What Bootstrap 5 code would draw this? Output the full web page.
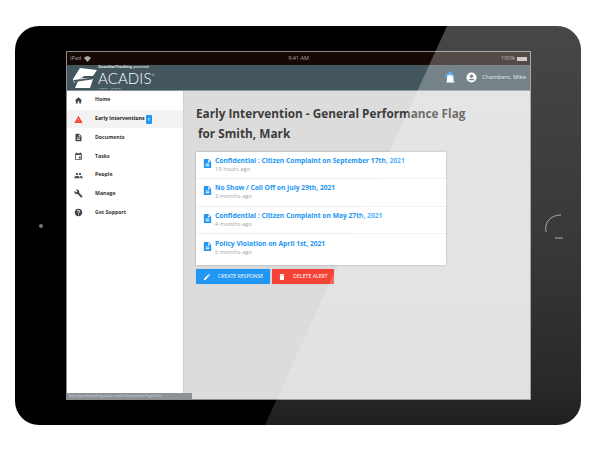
<!DOCTYPE html>
<html lang="en"><head><meta charset="utf-8"><title>Acadis</title>
<link rel="stylesheet" href="https://cdn.jsdelivr.net/npm/bootstrap@5.3.0/dist/css/bootstrap.min.css">
<style>
html,body{height:100%;background:#fff}
body{padding:26px 19px 25px 15px;font-family:"Open Sans","Liberation Sans",sans-serif;overflow:hidden}
.tablet{width:566px;height:399px;background:#000;border-radius:24px;position:relative;overflow:hidden}
.bezel-l{width:51px}.bezel-r{width:50px}
.cam{width:4px;height:4px;border-radius:50%;background:#777}
.homebtn{width:26px;height:28px;fill:none;stroke:#b5b5b5;stroke-width:.8}
.screen{width:465px;height:349px;margin:25px 0;border:1px solid #8d8a88;background:#dcdcdc;position:relative;overflow:hidden}
.statusbar{height:13px;background:#150805;color:#a8a8a8;font-size:5.5px;padding:0 3px}
.statusbar>span{width:60px}
.wifi{width:7px;height:6px;fill:#a8a8a8;margin-left:3px}
.batt{display:inline-block;width:10px;height:4px;background:#bbb;margin-left:2px;vertical-align:-.5px}
.appbar{height:26px;background:#44565e;color:#dfe5e7;border-bottom:1px solid #8a979c}
.logo-mark{width:26px;height:22px;margin-left:5px}
.logo-text{height:26px;margin-top:-2px}
.logo-small{font-family:"Liberation Sans",sans-serif;font-size:4px;line-height:5px;font-weight:700;color:#e9eeee;white-space:nowrap}
.logo-big{font-family:Lato,sans-serif;font-size:15px;line-height:18px;font-weight:300;color:#fff;letter-spacing:.1px}
.logo-big sup{font-size:4px;top:-7px}
.logo-tiny{font-family:"Liberation Sans",sans-serif;font-size:2.5px;line-height:3px;color:#c8d0d3}
.usr{font-size:5.8px;gap:0}
.ic-bell{width:12px;height:13px;margin-right:10px}
.ic-acct{width:11px;height:11px;margin-right:5px}
.side{width:117px;background:#fff;border-right:1px solid #cfcfcf;flex:none}
.side-item{height:18.7px;padding-left:7px;color:#333;font-size:5.2px;font-weight:700;white-space:nowrap}
.side-item svg{width:9px;height:9px;margin-right:12px;fill:#454545;flex:none}
.side-item.on{background:#f3f3f3;color:#222}
.side-item.on svg{fill:#f44336}
.pill{width:6px;height:9px;background:#2196f3;border-radius:1px;margin-left:1px;color:#fff;font-size:4px;line-height:9px;text-align:center}
.main{padding:12px 12px 0 12px}
.pagehead{font-size:11.8px;line-height:20px;font-weight:700;color:#3c3c3c;margin:0 0 9px;white-space:nowrap}
.pagehead span{display:block;padding-left:2px}
.flags{width:250px;height:113px;border-radius:0;border:0;box-shadow:0 0 2px rgba(0,0,0,.3);background:#fff}
.flags .list-group-item{height:27.4px;border:0;border-bottom:1px solid #eee;padding:4px 6px;background:transparent}
.flags .list-group-item:last-child{border-bottom:0;padding-top:5px}
.flags svg{width:11px;height:13px;fill:#2196f3;margin:1px 2px 0 0;flex:none}
.flag-t{font-size:6.7px;line-height:9px;font-weight:700;color:#2196f3;white-space:nowrap}
.flag-s{font-size:5.8px;line-height:8px;color:#a5a5a5;white-space:nowrap}
.acts{gap:2px;margin-top:4px}
.acts .btn{height:15px;font-size:5.2px;line-height:15px;padding:0;border:0;border-radius:1px;color:#fff;display:flex;align-items:center;justify-content:center;gap:7px;box-shadow:0 0 1px rgba(0,0,0,.3)}
.acts svg{width:8px;height:8px;fill:#fff}
.b-new{width:74px;background:#2196f3}.b-del{width:62px;background:#f44336}
.urlbar{position:absolute;left:0;bottom:0;width:125px;height:6px;background:#8f9294;color:#c8d7e4;font-size:3px;line-height:6px;padding-left:2px;white-space:nowrap;overflow:hidden}
.glare{position:absolute;inset:0;pointer-events:none;clip-path:polygon(432px 0,100% 0,100% 100%,250px 100%);background:linear-gradient(to bottom,rgba(255,255,255,.28),rgba(255,255,255,.22) 55%,rgba(255,255,255,.16) 90%,rgba(255,255,255,.12))}
</style></head>
<body>
<svg width="0" height="0" class="position-absolute"><defs>
<symbol id="i-home" viewBox="0 0 24 24"><path d="M10 20v-6h4v6h5v-8h3L12 3 2 12h3v8z"/></symbol>
<symbol id="i-warn" viewBox="0 0 24 24"><path d="M1 21h22L12 2 1 21zm12-3h-2v-2h2v2zm0-4h-2v-4h2v4z"/></symbol>
<symbol id="i-doc" viewBox="0 0 24 24"><path d="M14 2H6c-1.1 0-2 .9-2 2v16c0 1.1.9 2 2 2h12c1.1 0 2-.9 2-2V8l-6-6zm2 16H8v-2h8v2zm0-4H8v-2h8v2zm-3-5V3.5L18.5 9H13z"/></symbol>
<symbol id="i-cal" viewBox="0 0 24 24"><path d="M19 3h-1V1h-2v2H8V1H6v2H5c-1.1 0-2 .9-2 2v14c0 1.1.9 2 2 2h14c1.1 0 2-.9 2-2V5c0-1.1-.9-2-2-2zm0 16H5V8h14v11zM13 12h5v5h-5z"/></symbol>
<symbol id="i-ppl" viewBox="0 0 24 24"><path d="M16 11c1.66 0 3-1.34 3-3s-1.34-3-3-3-3 1.34-3 3 1.34 3 3 3zm-8 0c1.66 0 3-1.34 3-3S9.66 5 8 5 5 6.34 5 8s1.34 3 3 3zm0 2c-2.33 0-7 1.17-7 3.5V19h14v-2.5C15 14.17 10.33 13 8 13zm8 0c-.29 0-.62.02-.97.05 1.16.84 1.97 1.97 1.97 3.45V19h6v-2.5c0-2.33-4.67-3.5-7-3.5z"/></symbol>
<symbol id="i-wr" viewBox="0 0 24 24"><path d="M22.7 19l-9.1-9.1c.9-2.3.4-5-1.5-6.9-2-2-5-2.4-7.4-1.3L9 6 6 9 1.6 4.7C.4 7.1.9 10.1 2.9 12.1c1.9 1.9 4.6 2.4 6.9 1.5l9.1 9.1c.4.4 1 .4 1.4 0l2.3-2.3c.5-.4.5-1.1.1-1.4z"/></symbol>
<symbol id="i-help" viewBox="0 0 24 24"><path d="M12 2C6.48 2 2 6.48 2 12s4.48 10 10 10 10-4.48 10-10S17.52 2 12 2zm1 17h-2v-2h2v2zm2.07-7.75l-.9.92C13.45 12.9 13 13.5 13 15h-2v-.5c0-1.1.45-2.1 1.17-2.83l1.24-1.26c.37-.36.59-.86.59-1.41 0-1.1-.9-2-2-2s-2 .9-2 2H8c0-2.21 1.79-4 4-4s4 1.79 4 4c0 .88-.36 1.68-.93 2.25z"/></symbol>
<symbol id="i-edit" viewBox="0 0 24 24"><path d="M3 17.25V21h3.75L17.81 9.94l-3.75-3.75L3 17.25zM20.71 7.04a1 1 0 0 0 0-1.41l-2.34-2.34a1 1 0 0 0-1.41 0l-1.83 1.83 3.75 3.75 1.83-1.83z"/></symbol>
<symbol id="i-del" viewBox="0 0 24 24"><path d="M6 19c0 1.1.9 2 2 2h8c1.1 0 2-.9 2-2V7H6v12zM19 4h-3.5l-1-1h-5l-1 1H5v2h14V4z"/></symbol>
</defs></svg>
<div class="tablet d-flex">
  <div class="bezel-l d-flex align-items-center justify-content-center"><div class="cam"></div></div>
  <div class="screen d-flex flex-column">
    <div class="statusbar d-flex align-items-center justify-content-between">
      <span>iPad<svg class="wifi" viewBox="0 0 14 12"><path d="M7 12 0 4C4-1 10-1 14 4z"/></svg></span><span class="text-center">9:41 AM</span><span class="text-end">100%<i class="batt"></i></span>
    </div>
    <div class="appbar d-flex align-items-center justify-content-between">
      <div class="d-flex align-items-center">
        <svg class="logo-mark" viewBox="0 0 26 22"><path fill="#fff" d="M8 1 25 3 21 9 12 9 6 14 3 21 18 21 21 12 9 11 2 16 1 12z"/><path fill="#44565e" d="M2 13 20 11 20 12.500 2 15z"/></svg>
        <div class="logo-text">
          <div class="logo-small">GuardianTracking <span class="fw-normal">powered</span></div>
          <div class="logo-big">ACADIS<sup>&reg;</sup></div>
          <div class="logo-tiny">AFFECT · ACHIEVE</div>
        </div>
      </div>
      <div class="usr d-flex align-items-center me-1">
        <svg class="ic-bell" viewBox="0 0 12 13"><path fill="#2196f3" d="M6 0 11 5 6 10 1 5z"/><path fill="#fff" d="M6 4c2 0 3.500 1.500 3.500 3.500V10L11 11.500H2L3 10V7C3 5 4 4 6 4z"/></svg>
        <svg class="ic-acct" viewBox="0 0 24 24"><circle cx="12" cy="12" r="11" fill="#fff"/><circle cx="12" cy="9" r="3.500" fill="#44565e"/><path fill="#44565e" d="M6 17c1-3 11-3 12 0v1H6z"/></svg>
        <span>Chambers, Mike</span>
      </div>
    </div>
    <div class="d-flex flex-grow-1">
      <nav class="side">
        <div class="side-item d-flex align-items-center"><svg><use href="#i-home"/></svg>Home</div>
        <div class="side-item on d-flex align-items-center"><svg><use href="#i-warn"/></svg>Early Interventions<span class="pill">1</span></div>
        <div class="side-item d-flex align-items-center"><svg><use href="#i-doc"/></svg>Documents</div>
        <div class="side-item d-flex align-items-center"><svg><use href="#i-cal"/></svg>Tasks</div>
        <div class="side-item d-flex align-items-center"><svg><use href="#i-ppl"/></svg>People</div>
        <div class="side-item d-flex align-items-center"><svg><use href="#i-wr"/></svg>Manage</div>
        <div class="side-item d-flex align-items-center"><svg><use href="#i-help"/></svg>Get Support</div>
      </nav>
      <main class="main flex-grow-1">
        <h1 class="pagehead">Early Intervention - General Performance Flag<span>for Smith, Mark</span></h1>
        <div class="flags list-group">
          <div class="list-group-item d-flex"><svg><use href="#i-doc"/></svg><div><div class="flag-t">Confidential : Citizen Complaint on September 17th, 2021</div><div class="flag-s">13 hours ago</div></div></div>
          <div class="list-group-item d-flex"><svg><use href="#i-doc"/></svg><div><div class="flag-t">No Show / Call Off on July 29th, 2021</div><div class="flag-s">2 months ago</div></div></div>
          <div class="list-group-item d-flex"><svg><use href="#i-doc"/></svg><div><div class="flag-t">Confidential : Citizen Complaint on May 27th, 2021</div><div class="flag-s">4 months ago</div></div></div>
          <div class="list-group-item d-flex"><svg><use href="#i-doc"/></svg><div><div class="flag-t">Policy Violation on April 1st, 2021</div><div class="flag-s">6 months ago</div></div></div>
        </div>
        <div class="acts d-flex">
          <button class="btn b-new" type="button"><svg><use href="#i-edit"/></svg>CREATE RESPONSE</button>
          <button class="btn b-del" type="button"><svg><use href="#i-del"/></svg>DELETE ALERT</button>
        </div>
      </main>
    </div>
    <div class="urlbar">https://guardiantracking.acadis.com/EarlyIntervention/Flag/Details</div>
  </div>
  <div class="bezel-r d-flex align-items-center justify-content-center"><svg class="homebtn" viewBox="0 0 26 28"><path d="M3 20C1 10 8 3 18 3"/><path d="M12 26H20"/></svg></div>
  <div class="glare"></div>
</div>
</body></html>
